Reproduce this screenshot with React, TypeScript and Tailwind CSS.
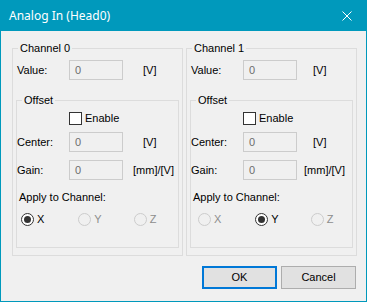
import React from "react";

const Input = () => (
  <div className="w-[54px] h-[20px] border border-[#cccccc] bg-[#f0f0f0] pl-[5px] flex items-center text-[#6d6d6d]">
    0
  </div>
);

const Row = ({ label, unit, unitClass }: { label: string; unit: string; unitClass: string }) => (
  <div className="flex items-center h-[20px]">
    <span className="w-[52px]">{label}</span>
    <Input />
    <span className={unitClass}>{unit}</span>
  </div>
);

const Radio = ({ label, checked }: { label: string; checked?: boolean }) => (
  <div className="flex items-center h-[13px]">
    {checked ? (
      <div className="w-[13px] h-[13px] rounded-full border border-[#333333] bg-white flex items-center justify-center">
        <div className="w-[7px] h-[7px] rounded-full bg-[#333333]" />
      </div>
    ) : (
      <div className="w-[13px] h-[13px] rounded-full border border-[#cccccc] bg-[#f0f0f0]" />
    )}
    <span className={checked ? "ml-[3px] text-black" : "ml-[3px] text-[#8d8d8d]"}>{label}</span>
  </div>
);

type ChannelProps = {
  title: string;
  sel: "X" | "Y" | "Z";
  vClass: string;
  mmClass: string;
  radios: string[];
};

const Channel = ({ title, sel, vClass, mmClass, radios }: ChannelProps) => (
  <fieldset className="w-[171px] border border-[#dcdcdc] p-0 m-0 min-w-0">
    <legend className="ml-[5px] px-[2px] leading-[13px]">{title}</legend>
    <div className="pl-[4px] mt-[5px]">
      <Row label="Value:" unit="[V]" unitClass={vClass} />
    </div>
    <fieldset className="mx-[3px] mt-[14px] mb-[7px] border border-[#dcdcdc] p-0 min-w-0">
      <legend className="ml-[5px] px-[2px] leading-[13px]">Offset</legend>
      <div className="flex items-center h-[13px] mt-[5px] pl-[52px]">
        <div className="w-[13px] h-[13px] border border-[#333333] bg-white" />
        <span className="ml-[3px]">Enable</span>
      </div>
      <div className="mt-[7px]">
        <Row label="Center:" unit="[V]" unitClass={vClass} />
      </div>
      <div className="mt-[8px]">
        <Row label="Gain:" unit="[mm]/[V]" unitClass={mmClass} />
      </div>
      <div className="mt-[11px] pl-[2px] leading-[13px]">Apply to Channel:</div>
      <div className="mt-[9px] mb-[21px] flex h-[13px]">
        <div className={radios[0]}>
          <Radio label="X" checked={sel === "X"} />
        </div>
        <div className={radios[1]}>
          <Radio label="Y" checked={sel === "Y"} />
        </div>
        <div className={radios[2]}>
          <Radio label="Z" checked={sel === "Z"} />
        </div>
      </div>
    </fieldset>
  </fieldset>
);

export default function App() {
  return (
    <div
      className="w-[367px] h-[302px] flex flex-col bg-[#f0f0f0] border-x border-b border-[#0099bc] text-[11px] text-black"
      style={{ fontFamily: '"Liberation Sans", Arial, sans-serif' }}
    >
      <div className="h-[31px] shrink-0 bg-[#0099bc] flex items-center justify-between pl-[8px] pr-[10px] text-white">
        <span className="text-[12px]" style={{ fontFamily: '"Noto Sans", sans-serif' }}>
          Analog In (Head0)
        </span>
        <svg width="10" height="10" viewBox="0 0 10 10" className="mr-[4px]">
          <path d="M0.5 0.5 L9.5 9.5 M9.5 0.5 L0.5 9.5" stroke="white" strokeWidth="1" fill="none" />
        </svg>
      </div>
      <div className="flex gap-[3px] pl-[11px] pt-[11px]">
        <Channel
          title="Channel 0"
          sel="X"
          vClass="ml-[20px]"
          mmClass="ml-[10px]"
          radios={["ml-[4px]", "ml-[34px]", "ml-[32px]"]}
        />
        <Channel
          title="Channel 1"
          sel="Y"
          vClass="ml-[16px]"
          mmClass="ml-[7px]"
          radios={["ml-[7px]", "ml-[34px]", "ml-[32px]"]}
        />
      </div>
      <div className="flex justify-end gap-[4px] mt-[10px] pr-[10px]">
        <button className="w-[75px] h-[23px] border-2 border-[#0078d7] bg-[#e1e1e1] flex items-center justify-center">
          OK
        </button>
        <button className="w-[75px] h-[23px] border border-[#adadad] bg-[#e1e1e1] flex items-center justify-center">
          Cancel
        </button>
      </div>
    </div>
  );
}
